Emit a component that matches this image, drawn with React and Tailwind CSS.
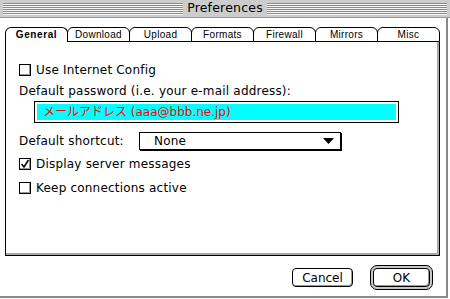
import React from "react";

const F = { fontFamily: '"DejaVu Sans", "Noto Sans CJK JP", sans-serif' };

function Stripes({ className }) {
  return (
    <div className={"flex flex-col " + className}>
      {[0, 1, 2, 3, 4, 5].map((i) => (
        <div key={i} className="flex flex-col">
          <div className="h-px bg-[#8c8c8c]" />
          <div className="h-px bg-[#f4f4f4]" />
        </div>
      ))}
    </div>
  );
}

function Checkbox({ checked }) {
  return (
    <div className="w-[12px] h-[12px] border border-black bg-white shadow-[inset_-1px_-1px_0_#999,inset_1px_1px_0_#fff] flex items-center justify-center shrink-0">
      {checked && (
        <svg width="10" height="10" viewBox="0 0 10 10">
          <path d="M1.5 5 L4 8 L8.5 1" stroke="#000" strokeWidth="1.6" fill="none" />
        </svg>
      )}
    </div>
  );
}

const tabs = ["General", "Download", "Upload", "Formats", "Firewall", "Mirrors", "Misc"];

export default function App() {
  return (
    <div className="w-[450px] h-[299px] bg-white overflow-hidden text-black" style={F}>
      <div className="h-[18px] bg-[#cccccc] flex items-center border-b border-[#9a9a9a]">
        <Stripes className="flex-1 ml-[3px] mr-[4px]" />
        <div className="text-[12.5px] leading-none tracking-[0.2px]">Preferences</div>
        <Stripes className="flex-1 ml-[4px] mr-[3px]" />
      </div>
      <div className="w-[448px] h-[280px] border-r-2 border-b-2 border-[#8a8a8a] flex flex-col">
        <div className="flex mt-[9px] ml-[5px] mr-[6px] items-end" style={{ fontFamily: '"Liberation Sans", sans-serif' }}>
          {tabs.map((t, i) => (
            <div
              key={t}
              className={
                "flex-1 h-[15px] flex items-center justify-center text-[10px] leading-none rounded-t-[6px] border-t border-l border-r border-black -ml-px first:ml-0 " +
                (i === 0 ? "font-bold border-b-0 h-[15px] tracking-[0.6px]" : "border-b tracking-[0.3px]")
              }
            >
              {t}
            </div>
          ))}
        </div>
        <div className="ml-[5px] mr-[6px] h-[214px] border-l border-r border-b border-black shadow-[inset_-2px_-2px_0_#a8a8a8] flex flex-col pl-[13px] text-[12px] leading-none tracking-[0.2px]">
          <div className="flex items-center gap-[5px] mt-[22px]">
            <Checkbox />
            <span>Use Internet Config</span>
          </div>
          <div className="mt-[9px]">Default password (i.e. your e-mail address):</div>
          <div className="mt-[4px] ml-[15px] w-[365px] h-[22px] border border-black bg-white p-[2px]">
            <div className="h-full bg-[#00ffff] text-[#ff0000] flex items-center pl-[6px] text-[12px] tracking-normal">
              メールアドレス (aaa@bbb.ne.jp)
            </div>
          </div>
          <div className="flex items-center mt-[9px]">
            <span className="w-[120px]">Default shortcut:</span>
            <div className="w-[202px] h-[18px] border border-black shadow-[1px_1px_0_#000] bg-white flex items-center pl-[14px] pr-[6px]">
              <span className="flex-1">None</span>
              <svg width="11" height="6" viewBox="0 0 11 6">
                <path d="M0 0 H11 L5.5 6 Z" fill="#000" />
              </svg>
            </div>
          </div>
          <div className="flex items-center gap-[5px] mt-[8px]">
            <Checkbox checked />
            <span>Display server messages</span>
          </div>
          <div className="flex items-center gap-[5px] mt-[12px]">
            <Checkbox />
            <span>Keep connections active</span>
          </div>
        </div>
        <div className="flex items-center justify-end mt-[9px] mr-[13px] gap-[17px] text-[12px] leading-none">
          <div className="w-[61px] h-[19px] border border-black rounded-[4px] bg-white shadow-[inset_-1px_-1px_0_#999] flex items-center justify-center">
            Cancel
          </div>
          <div className="w-[63px] h-[25px] border border-black rounded-[7px] bg-[#c8c8c8] p-[2px]">
            <div className="w-full h-full border border-black rounded-[4px] bg-white shadow-[inset_-1px_-1px_0_#999] flex items-center justify-center">
              OK
            </div>
          </div>
        </div>
      </div>
    </div>
  );
}
